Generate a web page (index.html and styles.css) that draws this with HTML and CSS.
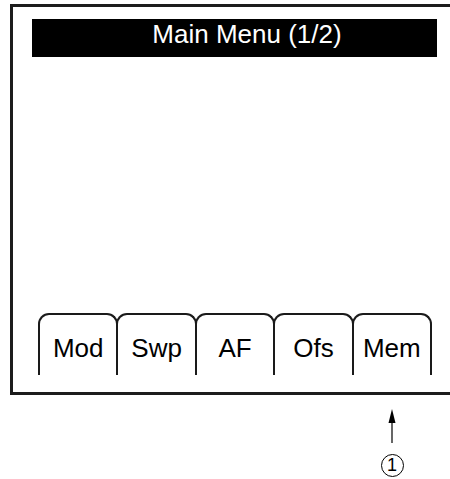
FILE: index.html
```html
<!DOCTYPE html>
<html lang="en">
<head>
  <meta charset="UTF-8">
  <title>Main Menu</title>
  <link rel="stylesheet" href="styles.css">
</head>
<body>

<div class="screen">
  <div class="title-bar">Main Menu (1/2)</div>
  <div class="spacer"></div>
  <div class="tabs">
    <div class="tab">Mod</div>
    <div class="tab">Swp</div>
    <div class="tab">AF</div>
    <div class="tab">Ofs</div>
    <div class="tab">Mem</div>
  </div>
</div>

<div class="callout">
  <svg class="arrow" width="12" height="34" viewBox="0 0 12 34">
    <polygon points="6,0 2.5,14 9.5,14" fill="#000"/>
    <line x1="6" y1="12" x2="6" y2="34" stroke="#000" stroke-width="1.2"/>
  </svg>
  <span class="marker">1</span>
</div>

</body>
</html>
```

FILE: styles.css
```css
body {
  margin: 0;
  font-family: "Liberation Sans", Arial, sans-serif;
  background: #fff;
  color: #000;
  overflow: hidden;
}
.screen {
  margin: 4px 0 0 10px;
  border: 3px solid #1c1c1c;
  border-right: none;
  height: 385px;
  display: flex;
  flex-direction: column;
}
.title-bar {
  margin: 12px 0 0 19px;
  width: 405px;
  background: #000;
  color: #fff;
  font-size: 26px;
  line-height: 30px;
  padding: 0 0 8px 25px;
  box-sizing: border-box;
  text-align: center;
}
.spacer {
  flex: 1;
}
.tabs {
  display: flex;
  width: 394px;
  margin: 0 0 17px 25px;
}
.tab {
  flex: 1;
  height: 62px;
  box-sizing: border-box;
  border: 2px solid #1a1a1a;
  border-bottom: none;
  border-radius: 11px 11px 0 0;
  padding-top: 19px;
  font-size: 26px;
  line-height: 28px;
  text-align: center;
}
.tab + .tab {
  margin-left: -2px;
}
.callout {
  width: 30px;
  margin: 14px 0 0 377px;
  display: flex;
  flex-direction: column;
  align-items: center;
}
.arrow {
  display: block;
}
.marker {
  margin-top: 11px;
  width: 21px;
  height: 21px;
  border: 1px solid #000;
  border-radius: 50%;
  font-size: 18px;
  line-height: 21px;
  text-align: center;
}
```
